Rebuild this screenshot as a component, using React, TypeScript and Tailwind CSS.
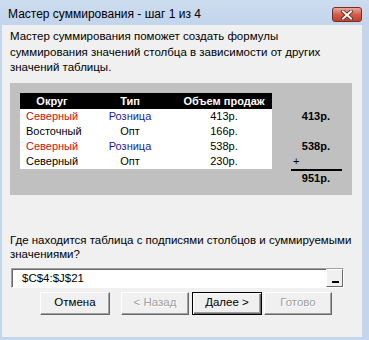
type BtnProps = {
  label: string;
  width: string;
  disabled?: boolean;
  isDefault?: boolean;
};

function Btn({ label, width, disabled, isDefault }: BtnProps) {
  let frame =
    "border border-t-white border-l-white border-r-[#696969] border-b-[#696969] shadow-[inset_-1px_-1px_0_#a0a0a0]";
  if (isDefault) {
    frame =
      "border border-black shadow-[inset_1px_1px_0_#ffffff,inset_-1px_-1px_0_#696969,inset_-2px_-2px_0_#a0a0a0]";
  }
  return (
    <div
      className={`${width} h-[23px] shrink-0 flex items-center justify-center bg-[#f0f0f0] text-[11.5px] ${frame} ${
        disabled ? "text-[#a0a0a0] [text-shadow:1px_1px_0_#ffffff]" : "text-black"
      }`}
    >
      {label}
    </div>
  );
}

const rows = [
  { okrug: "Северный", tip: "Розница", sum: "413р.", hl: true },
  { okrug: "Восточный", tip: "Опт", sum: "166р.", hl: false },
  { okrug: "Северный", tip: "Розница", sum: "538р.", hl: true },
  { okrug: "Северный", tip: "Опт", sum: "230р.", hl: false },
];

export default function App() {
  return (
    <div className="w-[369px] h-[340px] flex flex-col bg-[#c4d6ec] font-['Liberation_Sans',Arial,sans-serif] text-black select-none overflow-hidden">
      {/* Заголовок окна */}
      <div className="h-[25px] shrink-0 flex items-start pl-2 pr-[7px] bg-gradient-to-b from-[#cddcef] to-[#c2d5ec]">
        <div className="flex-1 pt-[6px] text-[12px] leading-[16px]">Мастер суммирования - шаг 1 из 4</div>
        <div className="mt-[7px] w-[30px] h-[15px] rounded-[3px] border border-[#7a2c22] bg-gradient-to-b from-[#e9a898] via-[#d45c4c] to-[#c0402c] flex items-center justify-center">
          <svg width="12" height="10" viewBox="0 0 12 10">
            <path d="M2 1.5 L10 8.5 M10 1.5 L2 8.5" stroke="#5a1d15" strokeWidth="3.6" strokeLinecap="square" />
            <path d="M2 1.5 L10 8.5 M10 1.5 L2 8.5" stroke="#ffffff" strokeWidth="2" strokeLinecap="square" />
          </svg>
        </div>
      </div>

      {/* Клиентская область */}
      <div className="flex-1 ml-[2px] mr-[7px] mb-[3px] bg-[#f0f0f0] pl-2 pr-[10px] pt-[4px] text-[11.5px] flex flex-col">
        <div className="leading-[15.5px]">
          <div className="whitespace-nowrap">Мастер суммирования поможет создать формулы</div>
          <div className="whitespace-nowrap">суммирования значений столбца в зависимости от других</div>
          <div className="whitespace-nowrap">значений таблицы.</div>
        </div>

        {/* Пример */}
        <div className="mt-[7px] h-[112px] bg-[#c0c0c0] flex pl-[10px] pt-[10px] text-[11px]">
          <div className="w-[252px]">
            <div className="grid grid-cols-[64px_92px_96px] h-[16px] leading-[16px] bg-black text-white font-bold text-center">
              <div>Округ</div>
              <div>Тип</div>
              <div>Объем продаж</div>
            </div>
            <div className="bg-white">
              {rows.map((r, i) => (
                <div key={i} className="grid grid-cols-[64px_92px_96px] h-[15px] leading-[15px]">
                  <div className={`pl-[6px] whitespace-nowrap ${r.hl ? "text-[#cc1111]" : "text-black"}`}>{r.okrug}</div>
                  <div className={`text-center ${r.hl ? "text-[#1a1a99]" : "text-black"}`}>{r.tip}</div>
                  <div className="text-center">{r.sum}</div>
                </div>
              ))}
            </div>
          </div>

          <div className="ml-[19px] w-[51px] flex flex-col font-bold leading-[15px]">
            <div className="h-[16px]" />
            <div className="h-[15px] text-right pr-[12px]">413р.</div>
            <div className="h-[15px]" />
            <div className="h-[15px] text-right pr-[12px]">538р.</div>
            <div className="h-[15px] pl-[2px] font-normal">+</div>
            <div className="h-[2px] bg-black" />
            <div className="h-[15px] text-right pr-[12px]">951р.</div>
          </div>
        </div>

        {/* Вопрос */}
        <div className="mt-[38px] leading-[14px]">
          <div className="whitespace-nowrap">Где находится таблица с подписями столбцов и суммируемыми</div>
          <div className="whitespace-nowrap">значениями?</div>
        </div>

        <div className="mt-[7px] ml-[1px] w-[333px] h-[20px] bg-white border border-t-[#a0a0a0] border-l-[#a0a0a0] border-b-white border-r-white shadow-[inset_1px_1px_0_#696969] flex items-stretch">
          <div className="flex-1 pl-[10px] leading-[18px]">$C$4:$J$21</div>
          <div className="w-[17px] bg-[#f0f0f0] border border-t-white border-l-white border-r-[#696969] border-b-[#696969] flex items-end justify-center pb-[3px]">
            <div className="w-[7px] h-[2px] bg-black ml-[1px]" />
          </div>
        </div>

        {/* Кнопки */}
        <div className="mt-[4px] ml-[30px] flex">
          <Btn label="Отмена" width="w-[70px]" />
          <div className="w-[11px]" />
          <Btn label="< Назад" width="w-[68px]" disabled />
          <div className="w-[3px]" />
          <Btn label="Далее >" width="w-[70px]" isDefault />
          <div className="w-[2px]" />
          <Btn label="Готово" width="w-[68px]" disabled />
        </div>
      </div>
    </div>
  );
}
